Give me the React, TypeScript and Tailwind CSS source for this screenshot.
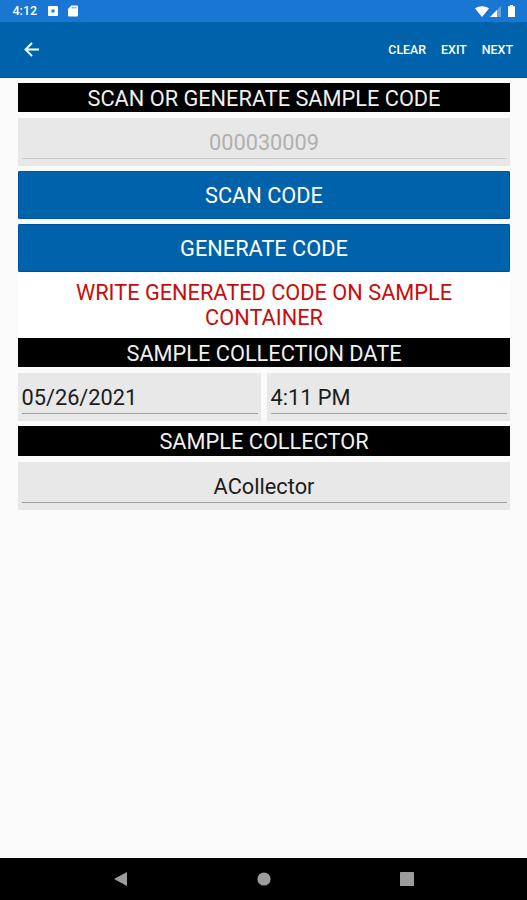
import type { ReactNode } from 'react';
import { clsx } from 'clsx';

const ACTIONS = ['CLEAR', 'EXIT', 'NEXT'];

function StatusBar() {
  return (
    <div className="flex h-[22px] shrink-0 items-center bg-[#1976d2] pl-[12.5px] pr-[12px] text-white">
      <span className="w-[25px] text-[12.5px] font-medium leading-none">4:12</span>
      <svg className="ml-[10.5px] h-[10px] w-[10px]" viewBox="0 0 10 10">
        <path
          fill="currentColor"
          fillRule="evenodd"
          d="M1 0h8a1 1 0 0 1 1 1v8a1 1 0 0 1-1 1H1a1 1 0 0 1-1-1V1a1 1 0 0 1 1-1zM3.5 3.5v3h3v-3z"
        />
      </svg>
      <svg className="ml-[9.5px] h-[12px] w-[10px]" viewBox="0 0 10 12">
        <path
          fill="currentColor"
          d="M3.3.5H9a1 1 0 0 1 1 1v9a1 1 0 0 1-1 1H1a1 1 0 0 1-1-1V4zM3.8 2v1.6h.8V2zM5.6 2v1.6h.8V2zM7.4 2v1.6h.8V2z"
          fillRule="evenodd"
        />
      </svg>
      <svg className="ml-auto h-[11px] w-[14px]" viewBox="0 0 14 11">
        <path fill="currentColor" d="M7 11 0 2.6C4 -.6 10 -.6 14 2.6z" />
      </svg>
      <svg className="ml-[1px] h-[11px] w-[11px]" viewBox="0 0 11 11">
        <path fill="currentColor" fillOpacity={0.35} d="M11 0v11H0z" />
        <path fill="currentColor" d="M7 4v7H0z" />
      </svg>
      <svg className="ml-[7px] h-[12px] w-[7px]" viewBox="0 0 7 12">
        <path fill="currentColor" d="M2 0h3v1.2h2V12H0V1.2h2z" />
      </svg>
    </div>
  );
}

function AppBar() {
  return (
    <header className="flex h-[56px] shrink-0 items-center border-b border-[#0051a0] bg-[#0062aa] pl-[24px] pr-[14px] text-white">
      <button type="button" aria-label="Back">
        <svg className="h-[15px] w-[15px]" viewBox="0 0 15 15" fill="none">
          <path
            d="M15 7.5H1.7M8 1 1.5 7.5 8 14"
            stroke="currentColor"
            strokeWidth={1.9}
          />
        </svg>
      </button>
      <div className="ml-auto flex gap-[15px] pt-[2px] text-[12.4px] font-medium leading-none">
        {ACTIONS.map((label) => (
          <button key={label} type="button">
            {label}
          </button>
        ))}
      </div>
    </header>
  );
}

function SectionTitle({ children }: { children: ReactNode }) {
  return (
    <h2 className="flex h-[29.5px] items-center justify-center bg-black pt-[3px] leading-none text-[#f0f0f0]">
      {children}
    </h2>
  );
}

interface FieldProps {
  value: string;
  centered?: boolean;
  disabled?: boolean;
}

function Field({ value, centered, disabled }: FieldProps) {
  return (
    <div className="h-[48px] flex-1 bg-[#e8e8e8] px-[3.5px] pt-[9px]">
      <div
        className={clsx(
          'h-[32px] border-b leading-[32px]',
          centered && 'text-center',
          disabled ? 'border-[#c8c8c8] text-[#b0b0b0]' : 'border-[#a0a0a0] text-[#1c1c1c]',
        )}
      >
        {value}
      </div>
    </div>
  );
}

function ActionButton({ children }: { children: ReactNode }) {
  return (
    <button
      type="button"
      className="h-[47.5px] w-full rounded-[1px] border border-[#0051a0] bg-[#0062aa] pt-[2px] leading-none text-white"
    >
      {children}
    </button>
  );
}

function NavBar() {
  return (
    <nav className="flex h-[42px] shrink-0 items-center justify-between bg-black pl-[114px] pr-[113px] text-[#9c9c9c]">
      <svg className="h-[14px] w-[13px]" viewBox="0 0 13 14">
        <path fill="currentColor" d="M13 0v14L0 7z" />
      </svg>
      <svg className="h-[14px] w-[14px]" viewBox="0 0 14 14">
        <circle cx="7" cy="7" r="6.6" fill="currentColor" />
      </svg>
      <svg className="h-[14px] w-[14px]" viewBox="0 0 14 14">
        <rect width="14" height="14" rx="0.6" fill="currentColor" />
      </svg>
    </nav>
  );
}

export default function App() {
  return (
    <div className="flex h-screen w-full flex-col bg-[#fafafa] font-['Roboto',sans-serif]">
      <StatusBar />
      <AppBar />
      <main className="flex-1 pl-[18px] pr-[17px] pt-[4.5px] text-[21.75px]">
        <SectionTitle>SCAN OR GENERATE SAMPLE CODE</SectionTitle>
        <div className="mt-[6px] flex">
          <Field value="000030009" centered disabled />
        </div>
        <div className="mt-[5px] flex flex-col gap-[5.5px]">
          <ActionButton>SCAN CODE</ActionButton>
          <ActionButton>GENERATE CODE</ActionButton>
        </div>
        <p className="h-[66px] bg-white px-8 pt-[8px] text-center leading-[25.6px] text-[#c80c0c]">
          WRITE GENERATED CODE ON SAMPLE CONTAINER
        </p>
        <SectionTitle>SAMPLE COLLECTION DATE</SectionTitle>
        <div className="mt-[5.5px] flex gap-[6px]">
          <Field value="05/26/2021" />
          <Field value="4:11 PM" />
        </div>
        <div className="mt-[5.5px]">
          <SectionTitle>SAMPLE COLLECTOR</SectionTitle>
        </div>
        <div className="mt-[6px] flex">
          <Field value="ACollector" centered />
        </div>
      </main>
      <NavBar />
    </div>
  );
}
